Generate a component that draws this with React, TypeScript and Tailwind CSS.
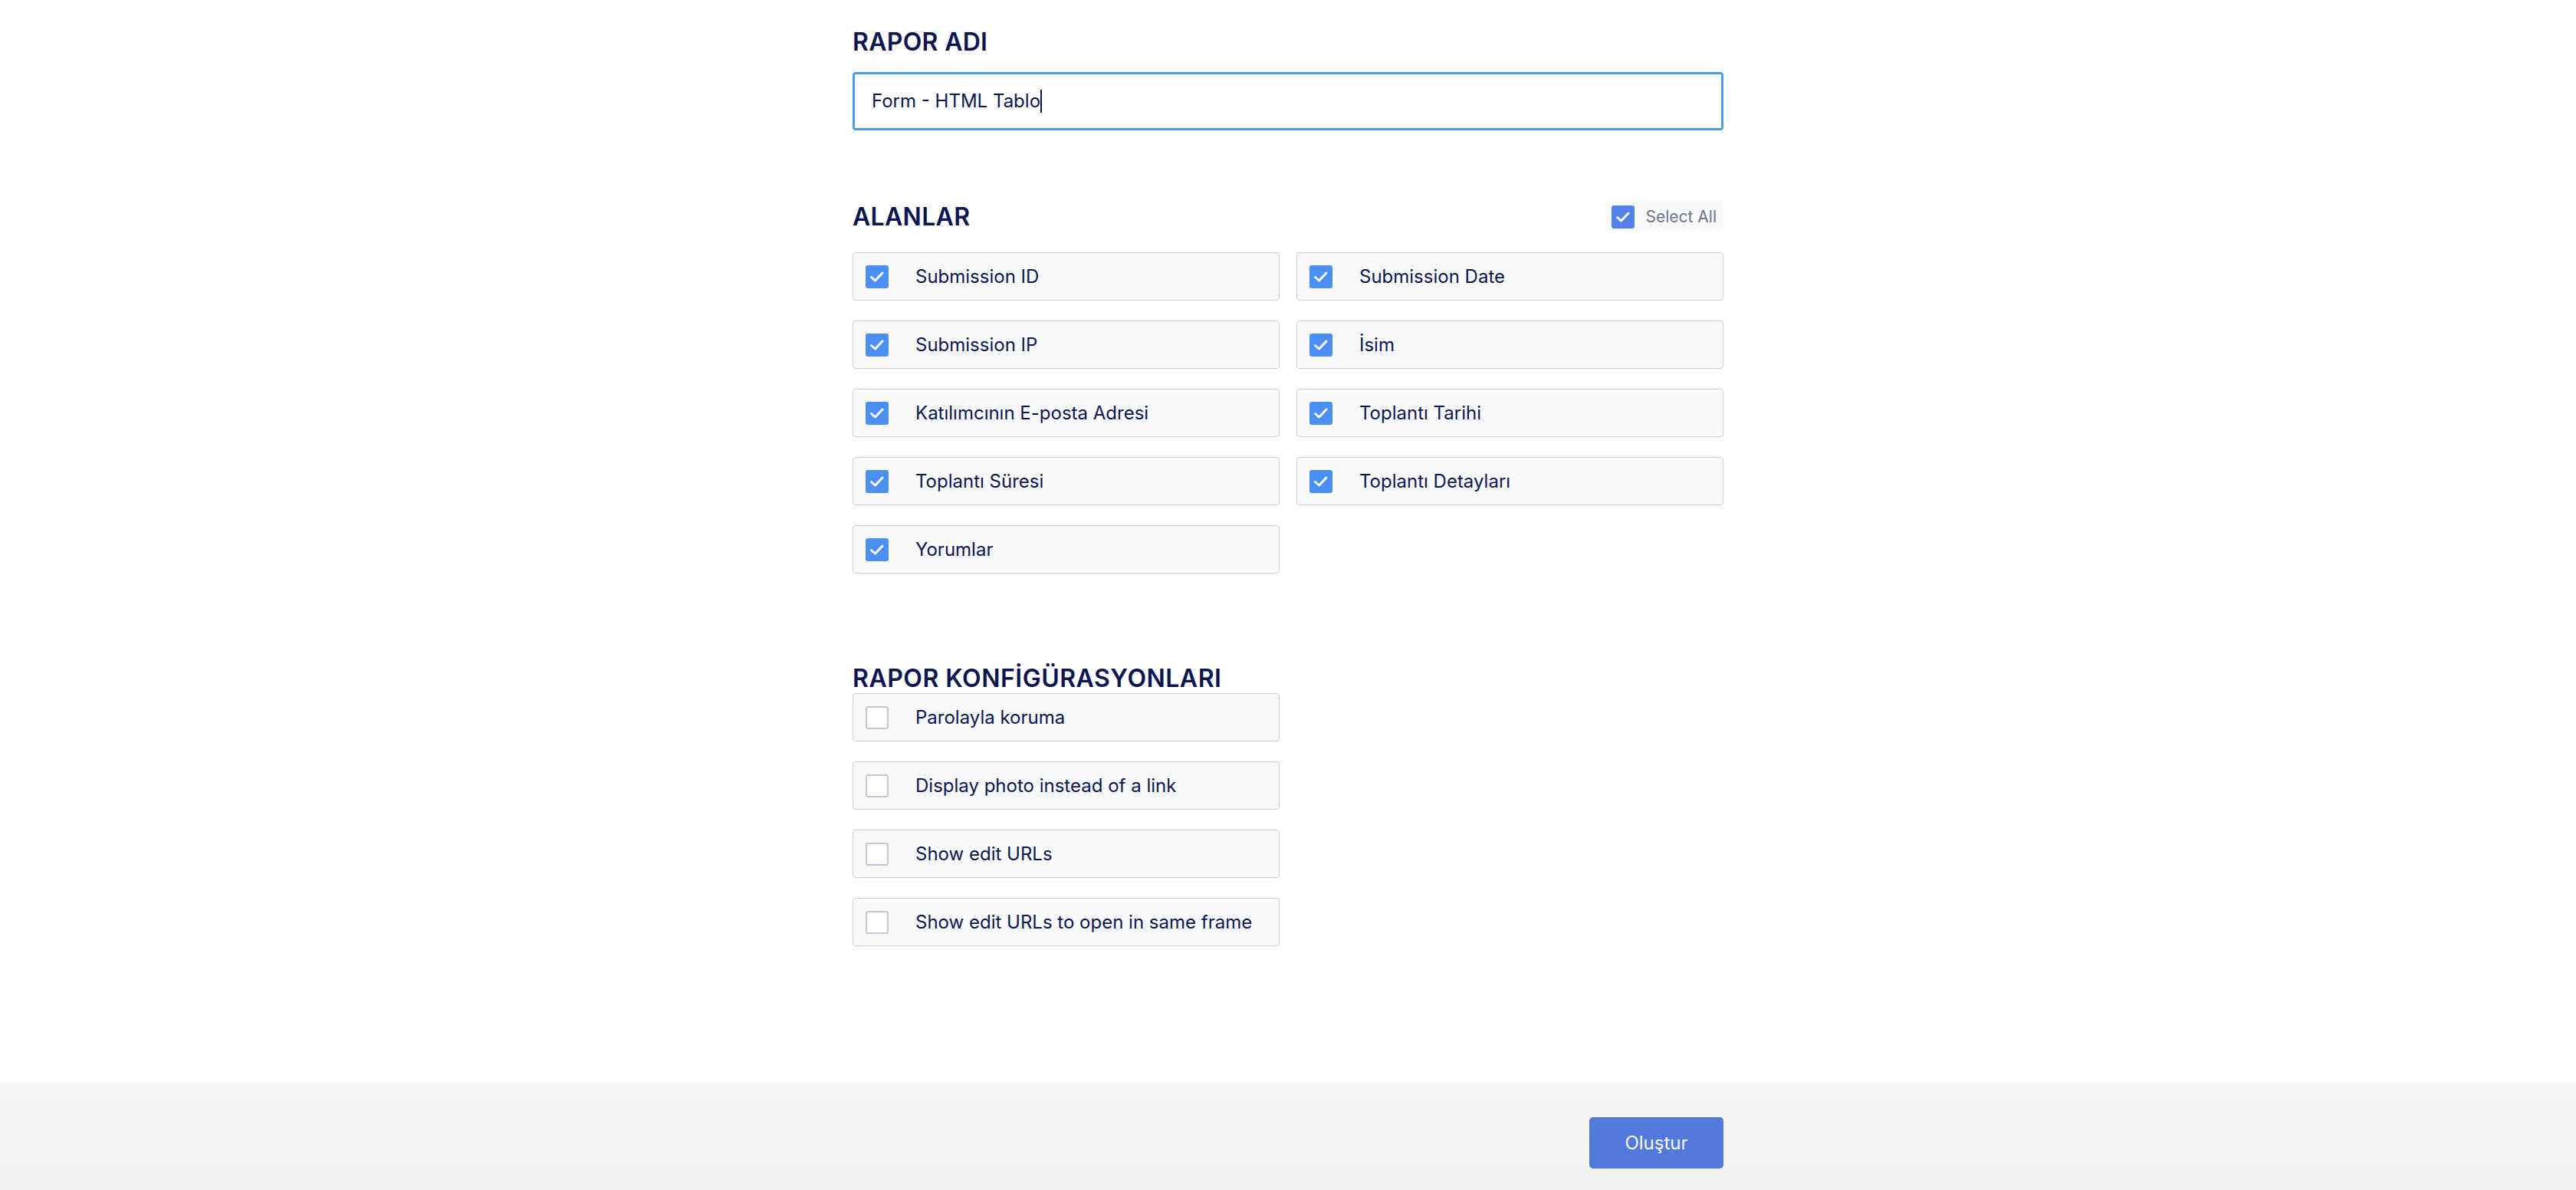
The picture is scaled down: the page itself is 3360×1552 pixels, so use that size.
import React from "react"

const fields = [
  "Submission ID",
  "Submission Date",
  "Submission IP",
  "İsim",
  "Katılımcının E-posta Adresi",
  "Toplantı Tarihi",
  "Toplantı Süresi",
  "Toplantı Detayları",
  "Yorumlar",
]

const configs = [
  "Parolayla koruma",
  "Display photo instead of a link",
  "Show edit URLs",
  "Show edit URLs to open in same frame",
]

function Check({ checked, tone = "bg-[#4b8ff4]" }: { checked: boolean; tone?: string }) {
  if (!checked) {
    return <span className="w-[30px] h-[30px] shrink-0 rounded-[3px] border-2 border-[#c3c7d6] bg-white" />
  }
  return (
    <span className={`w-[30px] h-[30px] shrink-0 rounded-[3px] ${tone} flex items-center justify-center`}>
      <svg width="20" height="20" viewBox="0 0 20 20" fill="none">
        <path d="M2.5 10.5 L7.5 15 L17 5" stroke="white" strokeWidth="3" strokeLinecap="round" strokeLinejoin="round" />
      </svg>
    </span>
  )
}

function OptionCard({ label, checked }: { label: string; checked: boolean }) {
  return (
    <div className="h-[63px] flex items-center pl-[16px] pr-4 rounded-[4px] border border-[#c9cedf] bg-[#f9fafc]">
      <Check checked={checked} />
      <span className="ml-[35px] text-[24px] text-[#0a1551] font-normal">{label}</span>
    </div>
  )
}

export default function App() {
  return (
    <div className="min-h-screen flex flex-col bg-white font-['Inter',sans-serif]">
      <main className="flex-1">
        <div className="w-[1136px] mx-auto pt-[35px]">
          <h1 className="text-[32px] leading-[40px] font-semibold text-[#0a1551] tracking-[0.3px]">RAPOR ADI</h1>

          <div className="mt-[19px] h-[76px] flex items-center px-[22px] rounded-[4px] border-[3px] border-[#4a9cf2] bg-white">
            <span className="text-[24px] text-[#0a1551]">Form - HTML Tablo</span>
            <span className="w-[2px] h-[30px] bg-[#0a1551]" />
          </div>

          <div className="mt-[92px] h-[41px] flex items-center justify-between">
            <h2 className="text-[32px] leading-[40px] font-semibold text-[#0a1551] tracking-[0.3px]">ALANLAR</h2>
            <label className="h-[41px] flex items-center gap-[15px] pl-[9px] pr-[9px] rounded-[6px] bg-[#f9fafc]">
              <Check checked tone="bg-[#5381ec]" />
              <span className="text-[21px] text-[#6f7490]">Select All</span>
            </label>
          </div>

          <div className="mt-[26px] grid grid-cols-2 gap-x-[22px] gap-y-[26px]">
            {fields.map((f) => (
              <OptionCard key={f} label={f} checked />
            ))}
          </div>

          <h2 className="mt-[117px] text-[32px] leading-[39px] font-semibold text-[#0a1551] tracking-[0.5px]">RAPOR KONFİGÜRASYONLARI</h2>

          <div className="w-[557px] flex flex-col gap-[26px]">
            {configs.map((c) => (
              <OptionCard key={c} label={c} checked={false} />
            ))}
          </div>
        </div>
      </main>

      <footer className="h-[140px] bg-gradient-to-b from-[#f7f7f9] to-[#f0f0f3]">
        <div className="w-[1136px] mx-auto pt-[45px] flex justify-end">
          <button className="w-[175px] h-[67px] rounded-[5px] bg-[#5079db] text-white text-[24px]">Oluştur</button>
        </div>
      </footer>
    </div>
  )
}
